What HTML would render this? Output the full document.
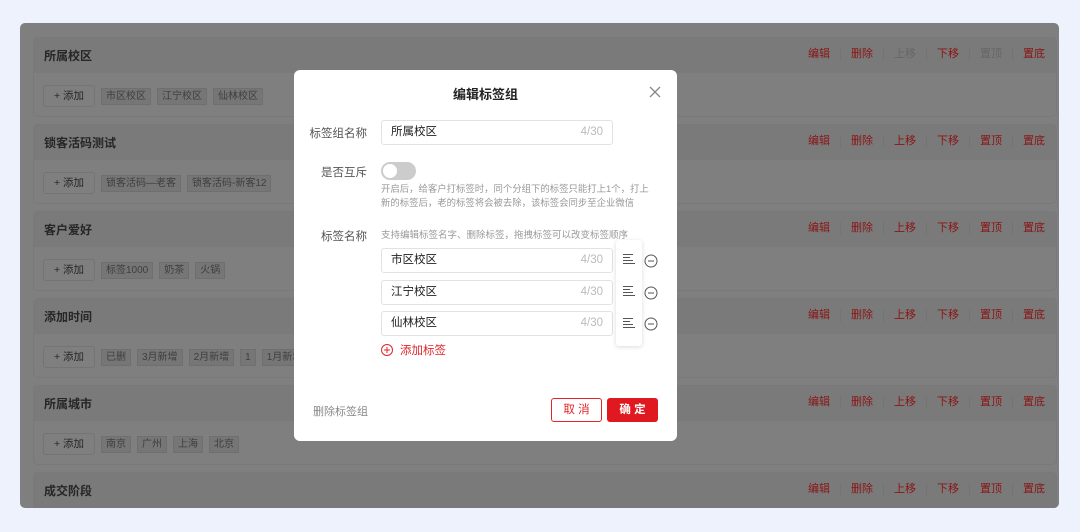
<!DOCTYPE html>
<html><head><meta charset="utf-8"><style>
*{box-sizing:border-box;margin:0;padding:0}
body{width:1080px;height:532px;background:#eef2fc;font-family:"Liberation Sans","Noto Sans CJK SC",sans-serif;position:relative;overflow:hidden}
.ov{position:absolute;left:20px;top:23px;width:1039px;height:485px;background:#7f7f7f;border-radius:5px;overflow:hidden}
.sec{position:absolute;left:13px;width:1024px;height:80px;border:1px solid #797979;border-radius:5px;background:#7f7f7f;overflow:hidden}
.hd{height:35px;background:#7a7a7a;position:relative}
.hd .t{position:absolute;left:10px;top:9px;font-size:12px;font-weight:bold;color:#262626}
.acts{position:absolute;right:1px;top:10px;font-size:11px;color:#8a1515;display:flex}
.acts span{padding:0 10px;border-left:1px solid #747474;line-height:13px}
.acts span:first-child{border-left:none}
.acts .d{color:#666}
.bd{position:relative;height:45px}
.add{position:absolute;left:9px;top:12px;width:52px;height:22px;border:1px solid #747474;border-radius:3px;font-size:10.5px;color:#262626;text-align:center;line-height:20px}
.tags{position:absolute;left:67px;top:15px;display:flex;gap:6px}
.tag{height:17px;padding:0 4px;background:#767676;border:1px solid #6f6f6f;font-size:10px;color:#3e3e3e;line-height:15px}
.modal{position:absolute;left:294px;top:70px;width:383px;height:371px;background:#fff;border-radius:6px}
.m{position:absolute;font-size:11.5px;color:#333}
.lbl{position:absolute;right:310px;font-size:11.5px;color:#555;text-align:right}
.inp{position:absolute;left:87px;width:232px;height:25px;border:1px solid #e2e2e2;border-radius:3px;font-size:11.5px;color:#222;padding-left:9px;line-height:23px}
.inp i{position:absolute;right:9px;font-style:normal;color:#bbb}
.hint{position:absolute;font-size:9.5px;color:#999;line-height:14px;white-space:nowrap}
</style></head><body>
<div class="ov">
 <div class="sec" style="top:14px"><div class="hd"><div class="t">所属校区</div><div class="acts"><span>编辑</span><span>删除</span><span class="d">上移</span><span>下移</span><span class="d">置顶</span><span>置底</span></div></div><div class="bd"><div class="add">+ 添加</div><div class="tags"><div class="tag">市区校区</div><div class="tag">江宁校区</div><div class="tag">仙林校区</div></div></div></div>
 <div class="sec" style="top:101px"><div class="hd"><div class="t">锁客活码测试</div><div class="acts"><span>编辑</span><span>删除</span><span>上移</span><span>下移</span><span>置顶</span><span>置底</span></div></div><div class="bd"><div class="add">+ 添加</div><div class="tags"><div class="tag">锁客活码—老客</div><div class="tag">锁客活码-新客12</div></div></div></div>
 <div class="sec" style="top:188px"><div class="hd"><div class="t">客户爱好</div><div class="acts"><span>编辑</span><span>删除</span><span>上移</span><span>下移</span><span>置顶</span><span>置底</span></div></div><div class="bd"><div class="add">+ 添加</div><div class="tags"><div class="tag">标签1000</div><div class="tag">奶茶</div><div class="tag">火锅</div></div></div></div>
 <div class="sec" style="top:275px"><div class="hd"><div class="t">添加时间</div><div class="acts"><span>编辑</span><span>删除</span><span>上移</span><span>下移</span><span>置顶</span><span>置底</span></div></div><div class="bd"><div class="add">+ 添加</div><div class="tags"><div class="tag">已删</div><div class="tag">3月新增</div><div class="tag">2月新增</div><div class="tag">1</div><div class="tag">1月新增</div></div></div></div>
 <div class="sec" style="top:362px"><div class="hd"><div class="t">所属城市</div><div class="acts"><span>编辑</span><span>删除</span><span>上移</span><span>下移</span><span>置顶</span><span>置底</span></div></div><div class="bd"><div class="add">+ 添加</div><div class="tags"><div class="tag">南京</div><div class="tag">广州</div><div class="tag">上海</div><div class="tag">北京</div></div></div></div>
 <div class="sec" style="top:449px"><div class="hd"><div class="t">成交阶段</div><div class="acts"><span>编辑</span><span>删除</span><span>上移</span><span>下移</span><span>置顶</span><span>置底</span></div></div></div>
</div>
<div class="modal">
 <div class="m" style="left:0;width:383px;text-align:center;top:14px;font-size:13px;font-weight:bold;color:#222">编辑标签组</div>
 <svg style="position:absolute;left:355px;top:16px" width="12" height="12"><path d="M1 1L11 11M11 1L1 11" stroke="#888" stroke-width="1.3"/></svg>
 <div class="lbl" style="top:55px">标签组名称</div>
 <div class="inp" style="top:50px">所属校区<i>4/30</i></div>
 <div class="lbl" style="top:94px">是否互斥</div>
 <div style="position:absolute;left:87px;top:92px;width:35px;height:18px;border-radius:9px;background:#ccc"><div style="position:absolute;left:2px;top:2px;width:14px;height:14px;border-radius:50%;background:#fff"></div></div>
 <div class="hint" style="left:87px;top:112px;font-size:9.4px">开启后，给客户打标签时，同个分组下的标签只能打上1个，打上<br>新的标签后，老的标签将会被去除，该标签会同步至企业微信</div>
 <div class="lbl" style="top:158px">标签名称</div>
 <div class="hint" style="left:87px;top:159px">支持编辑标签名字、删除标签，拖拽标签可以改变标签顺序</div>
 <div class="inp" style="top:178px">市区校区<i>4/30</i></div>
 <div class="inp" style="top:210px">江宁校区<i>4/30</i></div>
 <div class="inp" style="top:241px">仙林校区<i>4/30</i></div>
 <div style="position:absolute;left:322px;top:170px;width:26px;height:106px;background:#fff;border-radius:3px;box-shadow:0 1px 5px rgba(0,0,0,.15)">
  <svg width="26" height="106"><g stroke="#555" stroke-width="1"><path d="M7 14.5h10M7 17.5h7M7 20.5h10M7 23.5h12"/><path d="M7 46.5h10M7 49.5h7M7 52.5h10M7 55.5h12"/><path d="M7 78.5h10M7 81.5h7M7 84.5h10M7 87.5h12"/></g></svg>
 </div>
 <svg style="position:absolute;left:349px;top:183px" width="16" height="80"><g stroke="#555" stroke-width="1" fill="none"><circle cx="8" cy="8" r="6"/><path d="M5 8h6"/><circle cx="8" cy="40" r="6"/><path d="M5 40h6"/><circle cx="8" cy="71" r="6"/><path d="M5 71h6"/></g></svg>
 <svg style="position:absolute;left:86px;top:273px" width="14" height="14"><g stroke="#e0252b" stroke-width="1" fill="none"><circle cx="7" cy="7" r="5.5"/><path d="M4 7h6M7 4v6"/></g></svg>
 <div class="m" style="left:106px;top:272px;color:#e0252b">添加标签</div>
 <div class="m" style="left:19px;top:333px;color:#888;font-size:11px">删除标签组</div>
 <div style="position:absolute;left:257px;top:328px;width:51px;height:24px;border:1px solid #e0252b;border-radius:3px;color:#e0252b;font-size:11.5px;text-align:center;line-height:22px">取 消</div>
 <div style="position:absolute;left:313px;top:328px;width:51px;height:24px;background:#e0181f;border-radius:3px;color:#fff;font-size:11.5px;font-weight:bold;text-align:center;line-height:24px">确 定</div>
</div>
</body></html>
